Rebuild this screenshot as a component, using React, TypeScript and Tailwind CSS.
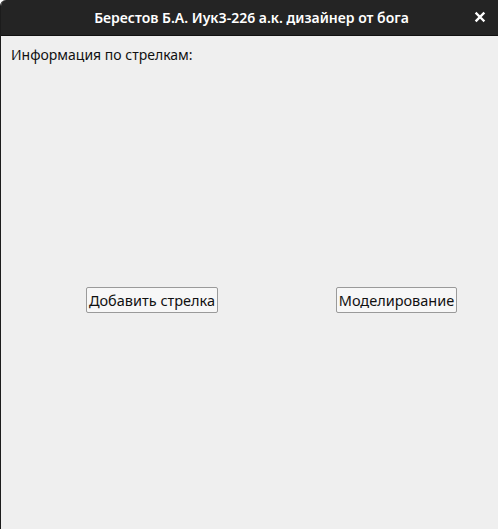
export default function App() {
  return (
    <div className="w-[498px] h-[529px] flex flex-col bg-[#efefef] border-l border-[#1c1c1c] rounded-tl-[6px] overflow-hidden" style={{ fontFamily: '"Noto Sans", "DejaVu Sans", sans-serif' }}>
      <div className="h-[36px] shrink-0 bg-[#242424] border-b border-[#111] flex items-center relative">
        <div className="flex-1 text-center text-white text-[14px] font-semibold pl-[4px]">Берестов Б.А. ИукЗ-226 а.к. дизайнер от бога</div>
        <div className="absolute right-[10px] top-[9px] text-white">
          <svg width="16" height="16" viewBox="0 0 16 16">
            <path d="M4.5 4.5 L11.5 11.5 M11.5 4.5 L4.5 11.5" stroke="#ffffff" strokeWidth="2.4" strokeLinecap="square" />
          </svg>
        </div>
      </div>
      <div className="flex-1 flex flex-col">
        <div className="pl-[10px] pt-[9px] text-[14px] text-[#111] leading-[20px]">Информация по стрелкам:</div>
        <div className="flex mt-[222px]">
          <div className="ml-[85px]">
            <button className="h-[26px] w-[132px] bg-[#f7f7f7] border border-[#9a9a9a] rounded-[2px] text-[14.5px] text-[#111] leading-none flex items-center justify-center">Добавить стрелка</button>
          </div>
          <div className="ml-[118px]">
            <button className="h-[26px] w-[121px] bg-[#f7f7f7] border border-[#9a9a9a] rounded-[2px] text-[14.5px] text-[#111] leading-none flex items-center justify-center">Моделирование</button>
          </div>
        </div>
      </div>
    </div>
  );
}
